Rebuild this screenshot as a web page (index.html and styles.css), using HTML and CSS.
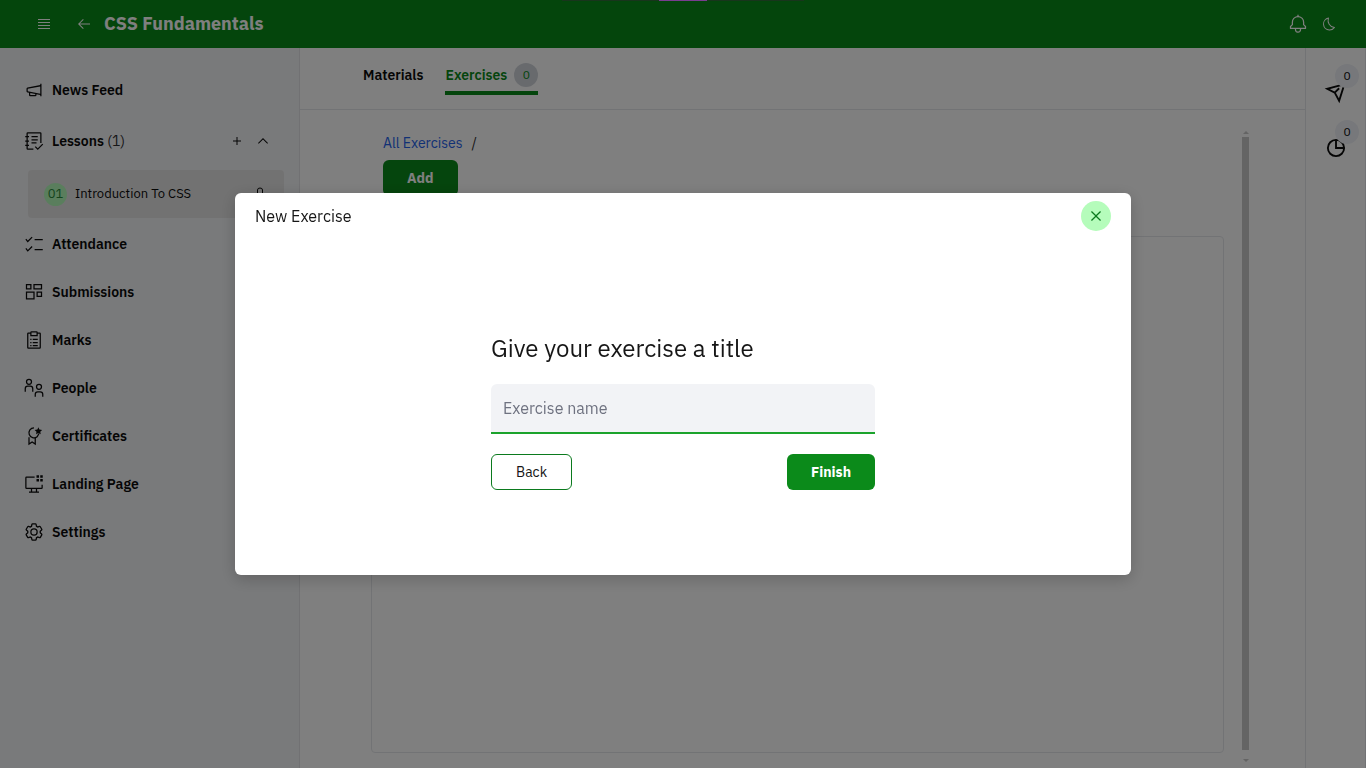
FILE: index.html
```html
<!DOCTYPE html>
<html lang="en">
<head>
<meta charset="utf-8">
<meta name="viewport" content="width=device-width, initial-scale=1">
<title>CSS Fundamentals</title>
<link rel="stylesheet" href="styles.css">
</head>
<body>
<div class="app">
  <header class="topbar">
    <div class="topbar-group">
      <button class="icon-btn menu-btn" aria-label="Menu"><svg class="icon-sm" viewBox="0 0 32 32"><path d="M4 6h24v2H4zM4 12h24v2H4zM4 18h24v2H4zM4 24h24v2H4z"/></svg></button>
      <a class="icon-btn" href="#" aria-label="Back to courses"><svg class="icon-sm" viewBox="0 0 32 32"><path d="M14 26 15.41 24.59 7.83 17H28V15H7.83L15.41 7.41 14 6 4 16z"/></svg></a>
      <h1 class="course-title">CSS Fundamentals</h1>
    </div>
    <div class="topbar-group topbar-actions">
      <button class="icon-btn" aria-label="Notifications"><svg class="icon" viewBox="0 0 32 32"><path d="M28.7 19.3 26 16.6V13a10 10 0 0 0-9-9.95V1h-2v2.05A10 10 0 0 0 6 13v3.6l-2.7 2.7A1 1 0 0 0 3 20v3a1 1 0 0 0 1 1h7v.8a5.15 5.15 0 0 0 4.5 5.2A5 5 0 0 0 21 25v-1h7a1 1 0 0 0 1-1v-3a1 1 0 0 0-.3-.7ZM19 25a3 3 0 0 1-6 0v-1h6Zm8-3H5v-1.6l2.7-2.7A1 1 0 0 0 8 17v-4a8 8 0 0 1 16 0v4a1 1 0 0 0 .3.7l2.7 2.7Z"/></svg></button>
      <button class="icon-btn" aria-label="Dark mode"><svg class="icon-sm" viewBox="0 0 32 32"><path d="M13.5 5.41A15.08 15.08 0 0 0 25.1 23.61a11.11 11.11 0 0 1-7.98 3.39h-.42A11.1 11.1 0 0 1 13.5 5.41M14.98 3a1 1 0 0 0-.17.02A13.1 13.1 0 0 0 16.63 29h.49a13.07 13.07 0 0 0 10.7-5.56 1 1 0 0 0-.78-1.56A13.08 13.08 0 0 1 15.89 4.38 1 1 0 0 0 14.98 3Z"/></svg></button>
    </div>
  </header>
  <div class="body">
    <nav class="sidebar" aria-label="Course">
      <a class="nav-item" href="#"><svg class="icon" viewBox="0 0 32 32"><path d="M26 6v2.17L5.64 11.87A2 2 0 0 0 4 13.83v4.34a2 2 0 0 0 1.64 2L8 20.56V24a2 2 0 0 0 2 2h8a2 2 0 0 0 2-2v-1.26l6 1.09V26h2V6ZM18 24h-8v-3.07l8 1.45ZM6 18.17v-4.34l20-3.63v11.6Z"/></svg>News Feed</a>
      <div class="nav-row">
        <a class="nav-item" href="#"><svg class="icon line" viewBox="0 0 32 32"><path d="M27 19V4q0-1-1-1H6q-1 0-1 1v24q0 1 1 1h9M2 9h6M2 16h6M2 23h6M12 9h10M12 14h10M12 19h8M18 25l4 4 8-8"/></svg><span>Lessons <span class="count">(1)</span></span></a>
        <button class="icon-btn" aria-label="Add lesson"><svg class="icon-sm" viewBox="0 0 32 32"><path d="M17 15V8h-2v7H8v2h7v7h2v-7h7v-2z"/></svg></button>
        <button class="icon-btn" aria-label="Collapse lessons"><svg class="icon-sm" viewBox="0 0 32 32"><path d="m16 10 10 10-1.4 1.4-8.6-8.6-8.6 8.6L6 20z"/></svg></button>
      </div>
      <a class="lesson" href="#"><span class="lesson-no">01</span><span class="lesson-name">Introduction To CSS</span><svg class="icon-sm line" viewBox="0 0 32 32"><path d="M11 15V8q0-4 5-4t5 4v7M7 15h18v14H7zM16 20v4"/></svg></a>
      <a class="nav-item" href="#"><svg class="icon line" viewBox="0 0 32 32"><path d="M3 8l3 4 7-7M17 9h13M3 23l3 4 7-7M17 25h13"/></svg>Attendance</a>
      <a class="nav-item" href="#"><svg class="icon line" viewBox="0 0 32 32"><path d="M4 4h7v7H4zM16 4h12v7H16zM4 16h12v11H4zM21 16h7v7h-7z"/></svg>Submissions</a>
      <a class="nav-item" href="#"><svg class="icon line" viewBox="0 0 32 32"><path d="M10 5H7q-1 0-1 1v22q0 1 1 1h18q1 0 1-1V6q0-1-1-1h-3M12 3h8q1 0 1 1v5H11V4q0-1 1-1zM10 15h2M14 15h8M10 20h2M14 20h8M10 25h2M14 25h8"/></svg>Marks</a>
      <a class="nav-item" href="#"><svg class="icon line" viewBox="0 0 32 32"><circle cx="8" cy="6" r="4"/><circle cx="24" cy="14" r="4"/><path d="M2 22v-5q0-4 4-4h4q4 0 4 4v5M18 30v-4q0-4 4-4h4q4 0 4 4v4"/></svg>People</a>
      <a class="nav-item" href="#"><svg class="icon line" viewBox="0 0 32 32"><path d="M16 3a8 8 0 1 0 5 14.200l3-5.200M8 18v11l5-3.500 5 3.500V19"/><path class="solid" d="m23 2 1.600 3.700 4.400.5-3 2.800.7 4-3.700-2-3.700 2 .7-4-3-2.800 4.400-.5z"/></svg>Certificates</a>
      <a class="nav-item" href="#"><svg class="icon line" viewBox="0 0 32 32"><path d="M17 5H4q-1 0-1 1v16q0 1 1 1h24q1 0 1-1v-5M12 23v6M20 23v6M8 29h16"/><path class="solid" d="M20 2h4v4h-4zM26 2h4v4h-4zM20 8h4v4h-4zM26 8h4v4h-4z"/></svg>Landing Page</a>
      <a class="nav-item" href="#"><svg class="icon" viewBox="0 0 32 32"><path d="M27 16.760c0-.25 0-.5 0-.76s0-.51 0-.77l1.920-1.680A2 2 0 0 0 29.300 11L26.940 7a2 2 0 0 0-1.730-1 2 2 0 0 0-.64.1l-2.430.820a11.350 11.350 0 0 0-1.310-.75l-.51-2.520a2 2 0 0 0-2-1.610H13.640a2 2 0 0 0-2 1.610l-.51 2.520a11.480 11.480 0 0 0-1.320.75L7.430 6.060A2 2 0 0 0 6.790 6 2 2 0 0 0 5.060 7L2.700 11a2 2 0 0 0 .41 2.510L5 15.240c0 .25 0 .5 0 .76s0 .51 0 .77l-1.890 1.680A2 2 0 0 0 2.700 21l2.360 4a2 2 0 0 0 1.730 1 2 2 0 0 0 .64-.1l2.430-.82a11.350 11.350 0 0 0 1.310.75l.51 2.520a2 2 0 0 0 2 1.610h4.720a2 2 0 0 0 2-1.610l.51-2.520a11.480 11.480 0 0 0 1.320-.75l2.420.82a2 2 0 0 0 .64.1 2 2 0 0 0 1.730-1L29.300 21a2 2 0 0 0-.41-2.510ZM25.210 24l-3.430-1.160a8.860 8.860 0 0 1-2.710 1.570L18.360 28H13.640l-.71-3.550a9.360 9.360 0 0 1-2.700-1.570L6.790 24 4.430 20l2.720-2.400a8.900 8.900 0 0 1 0-3.130L4.430 12 6.790 8l3.430 1.160a8.860 8.860 0 0 1 2.710-1.570L13.640 4h4.720l.71 3.550a9.360 9.360 0 0 1 2.700 1.570L25.210 8l2.360 4-2.720 2.400a8.900 8.900 0 0 1 0 3.130L27.570 20ZM16 22a6 6 0 1 1 6-6 5.940 5.940 0 0 1-6 6Zm0-10a3.910 3.910 0 0 0-4 4 3.910 3.910 0 0 0 4 4 3.910 3.910 0 0 0 4-4 3.910 3.910 0 0 0-4-4Z"/></svg>Settings</a>
    </nav>
    <main class="main">
      <div class="tabs">
        <a class="tab" href="#">Materials</a>
        <a class="tab tab-active" href="#">Exercises<span class="badge">0</span></a>
      </div>
      <div class="content">
        <div class="page">
          <div class="crumbs"><a href="#">All Exercises</a><span>/</span></div>
          <button class="btn btn-primary add-btn">Add</button>
          <section class="exercise-box" aria-label="Exercises"></section>
        </div>
        <div class="scroller" aria-hidden="true"><span class="arrow-up"></span><span class="thumb"></span><span class="arrow-down"></span></div>
      </div>
    </main>
    <aside class="rail">
      <button class="rail-btn" aria-label="Comments"><svg class="icon line bold" viewBox="0 0 32 32"><path d="M24 5 2 11l12 6 7 13 7-22M14 17l7-7"/></svg><span class="badge rail-badge">0</span></button>
      <button class="rail-btn" aria-label="Polls"><svg class="icon line bold" viewBox="0 0 32 32"><circle cx="16" cy="16" r="13"/><path d="M16 3v13h13"/></svg><span class="badge rail-badge">0</span></button>
    </aside>
  </div>
</div>
<div class="overlay">
  <div class="load-strip"><span></span></div>
  <div class="modal" role="dialog" aria-modal="true" aria-labelledby="dialog-title">
    <div class="modal-head">
      <h2 id="dialog-title">New Exercise</h2>
      <button class="close" aria-label="Close"><svg class="icon" viewBox="0 0 32 32"><path d="M17.41 16 24 9.41 22.59 8 16 14.59 9.41 8 8 9.41 14.59 16 8 22.59 9.41 24 16 17.41 22.59 24 24 22.59z"/></svg></button>
    </div>
    <form class="modal-form">
      <label for="exercise-name">Give your exercise a title</label>
      <input id="exercise-name" type="text" placeholder="Exercise name">
      <div class="actions">
        <button class="btn btn-outline" type="button">Back</button>
        <button class="btn btn-primary" type="submit">Finish</button>
      </div>
    </form>
  </div>
</div>
</body>
</html>
```
FILE: styles.css
```css
* { box-sizing: border-box; }
body {
  margin: 0;
  font-family: "IBM Plex Sans", Roboto, "Noto Sans", sans-serif;
  font-size: 14px;
  line-height: 20px;
  color: #0a0a0a;
}
a { color: inherit; text-decoration: none; }
button { font: inherit; color: inherit; border: 0; background: none; padding: 0; cursor: pointer; }
svg { display: block; flex: none; fill: currentColor; }
.icon { width: 20px; height: 20px; }
.icon-sm { width: 16px; height: 16px; }
.line { fill: none; stroke: currentColor; stroke-width: 2; overflow: visible; }
.bold { stroke-width: 3; }
.solid { fill: currentColor; stroke: none; }

.app { min-height: 100vh; display: flex; flex-direction: column; background: #fff; }
.topbar {
  height: 48px;
  padding: 0 25px 0 32px;
  display: flex;
  align-items: center;
  justify-content: space-between;
  background: #098a18;
  color: #fff;
}
.topbar-group { display: flex; align-items: center; }
.topbar-actions { gap: 7px; }
.icon-btn { display: grid; place-items: center; width: 24px; height: 24px; }
.menu-btn { margin-right: 16px; }
.course-title { margin: 0 0 0 8px; font-size: 18px; line-height: 24px; font-weight: 700; }

.body { flex: 1; display: flex; }
.sidebar {
  width: 300px;
  flex: none;
  padding: 18px 15px 0 12px;
  background: #f3f4f6;
  border-right: 1px solid #e2e3e6;
}
.nav-item {
  height: 48px;
  padding: 0 12px;
  display: flex;
  align-items: center;
  gap: 8px;
  font-weight: 600;
}
.nav-row { display: flex; align-items: center; gap: 2px; padding: 3px 9px 5px 0; }
.nav-row .nav-item { flex: 1; }
.count { font-weight: 400; color: #2e2e2e; }
.lesson {
  height: 48px;
  margin: 0 0 2px 16px;
  padding: 0 16px;
  display: flex;
  align-items: center;
  gap: 8px;
  border-radius: 4px;
  background: #e5e5e5;
}
.lesson-no {
  width: 23px;
  height: 23px;
  display: grid;
  place-items: center;
  border-radius: 50%;
  background: #b5fcbb;
  color: #2a8a3a;
  font-size: 13px;
}
.lesson-name { flex: 1; font-size: 13px; }

.main { flex: 1; min-width: 0; display: flex; flex-direction: column; }
.tabs {
  height: 62px;
  padding: 15px 63px 0;
  display: flex;
  align-items: flex-start;
  gap: 22px;
  border-bottom: 1px solid #e5e7eb;
  font-weight: 600;
}
.tab { height: 32px; display: flex; align-items: flex-start; line-height: 24px; gap: 7px; }
.tab-active { color: #098a18; border-bottom: 4px solid #098a18; }
.badge {
  width: 24px;
  height: 24px;
  display: grid;
  place-items: center;
  border-radius: 50%;
  background: #d1d5db;
  font-size: 12px;
  font-weight: 400;
}
.content { flex: 1; display: flex; gap: 18px; padding: 20px 56px 4px 71px; }
.page { flex: 1; display: flex; flex-direction: column; align-items: flex-start; padding-bottom: 11px; }
.crumbs { display: flex; gap: 9px; padding: 3px 12px 7px; color: #2e2e2e; }
.crumbs a { color: #2563eb; }
.btn {
  height: 36px;
  padding: 0 24px;
  border-radius: 6px;
  font-weight: 400;
}
.btn-primary { background: #0b8a1a; color: #fff; font-weight: 700; }
.btn-outline { border: 1px solid #0b7a1e; background: #fff; color: #161616; }
.add-btn { margin-left: 12px; }
.exercise-box { flex: 1; width: 100%; margin-top: 40px; border: 1px solid #e5e7eb; border-radius: 4px; }
.scroller { width: 7px; display: flex; flex-direction: column; align-items: center; }
.thumb { flex: 1; width: 7px; margin: 3px 0 9px; background: #c8c8c8; }
.arrow-up { border: 3px solid transparent; border-top: 0; border-bottom-color: #c8c8c8; margin-top: 1px; }
.arrow-down { border: 3px solid transparent; border-bottom: 0; border-top-color: #c8c8c8; margin-bottom: 2px; }
.rail {
  width: 61px;
  flex: none;
  padding: 16px 6px;
  border: 1px solid #e5e7eb;
  border-width: 0 1px;
}
.rail-btn { position: relative; display: flex; justify-content: center; align-items: center; width: 47px; height: 56px; }
.rail-badge { position: absolute; top: 0; right: 0; background: #eef1f6; }

.overlay { position: fixed; inset: 0; display: grid; place-items: center; background: rgba(0, 0, 0, 0.5); }
.load-strip { position: absolute; top: 0; left: 50%; width: 242px; height: 1px; margin-left: -121px; background: #18351c; display: flex; justify-content: center; }
.load-strip span { width: 48px; background: #793d90; }
.modal {
  width: calc(100% - 32px);
  max-width: 896px;
  min-height: 382px;
  display: flex;
  flex-direction: column;
  border-radius: 6px;
  background: #fff;
  box-shadow: 0 4px 16px rgba(0, 0, 0, 0.2);
}
.modal-head { display: flex; align-items: center; justify-content: space-between; padding: 8px 20px; }
.modal-head h2 { margin: 0; font-size: 16px; line-height: 24px; font-weight: 400; color: #161616; }
.close { width: 30px; height: 30px; display: grid; place-items: center; border-radius: 50%; background: #b5fcbb; color: #0b7a1e; }
.modal-form { width: 384px; max-width: 100%; margin: 93px auto 85px; display: flex; flex-direction: column; }
.modal-form label { font-size: 24px; line-height: 32px; color: #161616; margin-bottom: 20px; }
.modal-form input {
  width: 100%;
  height: 50px;
  padding: 0 12px;
  border: 0;
  border-bottom: 2px solid #1ba32c;
  border-radius: 6px 6px 0 0;
  outline: 0;
  background: #f2f3f6;
  font: inherit;
  font-size: 16px;
}
.modal-form input::placeholder { color: #6f7280; opacity: 1; }
.actions { display: flex; justify-content: space-between; margin-top: 20px; }
```
